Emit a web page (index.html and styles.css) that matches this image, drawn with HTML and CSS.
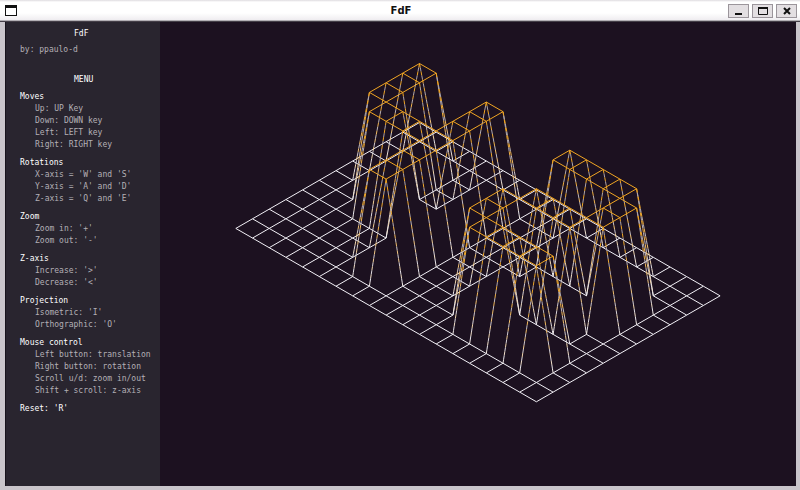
FILE: index.html
```html
<!DOCTYPE html>
<html lang="en">
<head>
<meta charset="utf-8">
<title>FdF</title>
<link rel="stylesheet" href="styles.css">
</head>
<body>
<div class="window">
  <header class="titlebar">
    <svg class="app-icon" width="12" height="12" viewBox="0 0 12 12" aria-hidden="true"><rect x="0.5" y="0.5" width="11" height="10" fill="#fff" stroke="#111"/><rect width="12" height="3" fill="#111"/></svg>
    <h1 class="title">FdF</h1>
    <div class="controls">
      <button class="control" aria-label="Minimize"><svg width="12" height="10" viewBox="0 0 12 10"><path d="M2 8H9" stroke="#111" stroke-width="2"/></svg></button>
      <button class="control" aria-label="Maximize"><svg width="12" height="10" viewBox="0 0 12 10"><path d="M1.5 1.5H10.5V8.500H1.5Z" fill="none" stroke="#111"/><path d="M1 2H11" stroke="#111" stroke-width="2"/></svg></button>
      <button class="control" aria-label="Close"><svg width="12" height="10" viewBox="0 0 12 10"><path d="M3 2L9 8M9 2L3 8" stroke="#111" stroke-width="2"/></svg></button>
    </div>
  </header>
  <main class="content">
    <aside class="menu">
      <h2 class="menu-title">FdF</h2>
      <p class="author">by: ppaulo-d</p>
      <h2 class="menu-title">MENU</h2>
      <div class="groups">
        <section><h3>Moves</h3><ul><li>Up: UP Key</li><li>Down: DOWN key</li><li>Left: LEFT key</li><li>Right: RIGHT key</li></ul></section>
        <section><h3>Rotations</h3><ul><li>X-axis = 'W' and 'S'</li><li>Y-axis = 'A' and 'D'</li><li>Z-axis = 'Q' and 'E'</li></ul></section>
        <section><h3>Zoom</h3><ul><li>Zoom in: '+'</li><li>Zoom out: '-'</li></ul></section>
        <section><h3>Z-axis</h3><ul><li>Increase: '&gt;'</li><li>Decrease: '&lt;'</li></ul></section>
        <section><h3>Projection</h3><ul><li>Isometric: 'I'</li><li>Orthographic: 'O'</li></ul></section>
        <section><h3>Mouse control</h3><ul><li>Left button: translation</li><li>Right button: rotation</li><li>Scroll u/d: zoom in/out</li><li>Shift + scroll: z-axis</li></ul></section>
        <section><h3>Reset: 'R'</h3></section>
      </div>
    </aside>
    <svg class="scene" id="scene" viewBox="0 0 636 464" role="img" aria-label="Wireframe of the number 42"></svg>
  </main>
</div>
<script src="script.js"></script>
</body>
</html>
```
FILE: styles.css
```css
* { box-sizing: border-box; }
body { margin: 0; background: #c9c5cb; }
.window {
  display: flex;
  flex-direction: column;
  height: 100vh;
  padding: 0 4px 4px 5px;
  background: #c9c5cb;
}
.titlebar {
  display: grid;
  grid-template-columns: 1fr auto 1fr;
  align-items: center;
  height: 22px;
  margin: 0 -4px 0 -5px;
  padding: 0 3px 0 5px;
  background: linear-gradient(#dedce0 0, #fff 2px, #fff 13px, #efedf0 20px, #77737a 21px, #120b16 22px);
}
.app-icon { display: block; }
.title {
  margin: 0;
  font: bold 10px/20px "DejaVu Sans", sans-serif;
  color: #111;
}
.controls { display: flex; gap: 3px; justify-content: flex-end; }
.control {
  display: flex;
  align-items: center;
  justify-content: center;
  width: 21px;
  height: 14px;
  padding: 0;
  border: 1px solid #9b959b;
  background: #e3dfe2;
}
.content {
  display: flex;
  flex: 1;
  min-height: 0;
  background: #1c1120;
}
.menu {
  flex: 0 0 155px;
  padding: 6px 0 0 14px;
  background: #29252f;
  border-left: 1px solid #17131c;
  color: #b4b0b6;
  font: 8px/12px "DejaVu Sans Mono", monospace;
  white-space: nowrap;
}
.menu h2, .menu h3 {
  margin: 0;
  font-size: 8px;
  font-weight: normal;
  color: #fff;
}
.menu .menu-title { padding-left: 54px; }
.author { margin: 4px 0 18px; }
.groups { display: flex; flex-direction: column; gap: 6px; margin-top: 5px; }
.groups ul { margin: 0; padding: 0 0 0 15px; list-style: none; }
.scene { flex: 1; min-width: 0; width: 100%; height: 100%; }
```
FILE: script.js
```js
const map = [
  "...................",
  "...................",
  "..##..##...#####...",
  "..##..##...######..",
  "..##..##.......##..",
  "..######....#####..",
  "...#####...#####...",
  "......##...##......",
  "......##...######..",
  "......##....#####..",
  "...................",
  "..................."
];
const scene = document.getElementById("scene");
const originX = 259.5, originY = 100.5, stepX = 16.7, stepY = 9.63, lift = 97.5;
const ORANGE = [240, 165, 35];
const WHITE = [242, 240, 246];
const GREY = [175, 165, 168];

function project(x, y) {
  const high = map[y][x] === "#";
  return {
    x: originX + (x - y) * stepX,
    y: originY + (x + y) * stepY - (high ? lift : 0),
    high
  };
}

function stroke(x1, y1, x2, y2, color) {
  const line = document.createElementNS("http://www.w3.org/2000/svg", "line");
  line.setAttribute("x1", x1);
  line.setAttribute("y1", y1);
  line.setAttribute("x2", x2);
  line.setAttribute("y2", y2);
  line.setAttribute("stroke", `rgb(${color.map(Math.round).join(",")})`);
  scene.append(line);
}

// Slopes alternate between a tinted and a grey run, fading to white at the ground.
function slope(top, base) {
  const parts = Math.round(Math.hypot(base.x - top.x, base.y - top.y) / 4);
  for (let i = 0; i < parts; i++) {
    const a = i / parts, b = (i + 1) / parts;
    const tint = i % 2 ? GREY : ORANGE;
    const fade = a * a;
    const color = tint.map((c, k) => c + (WHITE[k] - c) * fade);
    stroke(top.x + (base.x - top.x) * a, top.y + (base.y - top.y) * a,
      top.x + (base.x - top.x) * b, top.y + (base.y - top.y) * b, color);
  }
}

function edge(a, b) {
  if (a.high !== b.high) slope(a.high ? a : b, a.high ? b : a);
  else stroke(a.x, a.y, b.x, b.y, a.high ? ORANGE : WHITE);
}

for (let y = 0; y < map.length; y++) {
  for (let x = 0; x < map[y].length; x++) {
    const point = project(x, y);
    if (x + 1 < map[y].length) edge(point, project(x + 1, y));
    if (y + 1 < map.length) edge(point, project(x, y + 1));
  }
}
```
